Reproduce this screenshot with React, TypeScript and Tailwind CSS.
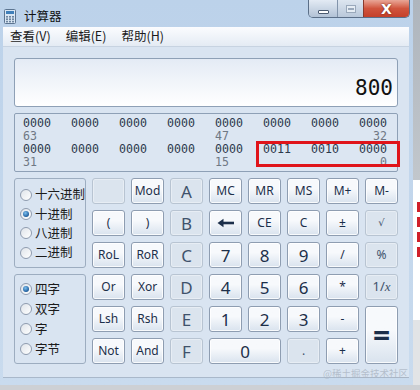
import React from "react";

const cjk = "font-['Microsoft_YaHei','Noto_Sans_CJK_SC',sans-serif]";
const latin = "font-['Segoe_UI','Noto_Sans','Noto_Sans_CJK_SC',sans-serif]";

type Key = { t: React.ReactNode; off?: boolean; big?: boolean; span?: string };

const keys: Key[] = [
  { t: "", off: true }, { t: "Mod" }, { t: "A", off: true, big: true }, { t: "MC" }, { t: "MR" }, { t: "MS" }, { t: "M+" }, { t: "M-" },
  { t: "(" }, { t: ")" }, { t: "B", off: true, big: true }, { t: "back" }, { t: "CE" }, { t: "C" }, { t: "±" }, { t: "√", off: true },
  { t: "RoL" }, { t: "RoR" }, { t: "C", off: true, big: true }, { t: "7", big: true }, { t: "8", big: true }, { t: "9", big: true }, { t: "/" }, { t: "%", off: true },
  { t: "Or" }, { t: "Xor" }, { t: "D", off: true, big: true }, { t: "4", big: true }, { t: "5", big: true }, { t: "6", big: true }, { t: "*" }, { t: "1/x", off: true },
  { t: "Lsh" }, { t: "Rsh" }, { t: "E", off: true, big: true }, { t: "1", big: true }, { t: "2", big: true }, { t: "3", big: true }, { t: "-" }, { t: "=", span: "row-span-2" },
  { t: "Not" }, { t: "And" }, { t: "F", off: true, big: true }, { t: "0", big: true, span: "col-span-2" }, { t: ".", off: true }, { t: "+" },
];

function KeyLabel({ k }: { k: Key }) {
  if (k.t === "back")
    return (
      <svg width="18" height="10" viewBox="0 0 18 10">
        <path d="M5 5H17" stroke="#1c2f4a" strokeWidth="2.6" />
        <path d="M0.5 5L6.5 0.8V9.2Z" fill="#1c2f4a" />
      </svg>
    );
  if (k.t === "1/x")
    return (
      <span className="text-[13px]">
        1/<span className="font-['Liberation_Serif',serif] italic">x</span>
      </span>
    );
  if (k.t === "√") return <span className="font-['DejaVu_Sans',sans-serif] text-[10px] leading-none">√</span>;
  if (k.t === "=") return <span className="text-[30px] font-bold leading-none">=</span>;
  return <span className={k.big ? "text-[17px] leading-none" : "text-[12px] leading-none"}>{k.t}</span>;
}

function Btn({ k }: { k: Key }) {
  const look = k.off
    ? "border-[#b8c4d2] bg-[#dbe4ee] text-[#3f526b] shadow-[inset_0_0_0_1px_rgba(255,255,255,0.35)]"
    : "border-[#8e9db1] bg-linear-to-b from-[#f7f9fc] from-40% to-[#d9e3ee] text-[#1c2f4a] shadow-[inset_0_0_0_1px_rgba(255,255,255,0.8)]";
  return (
    <div className={`flex items-center justify-center rounded-[3px] border ${look} ${k.span ?? ""}`}>
      <KeyLabel k={k} />
    </div>
  );
}

function Radio({ label, on, h }: { label: string; on?: boolean; h: string }) {
  return (
    <div className={`flex items-center gap-[3px] ${h}`}>
      <span className="flex size-[12px] items-center justify-center rounded-full border border-[#8f9caf] bg-linear-to-br from-[#dfe4ea] to-white">
        {on && <span className="size-[6px] rounded-full bg-[radial-gradient(circle_at_40%_35%,#7cc0f0,#1f5d9c_70%,#123c68)]" />}
      </span>
      <span className="text-[12.5px] text-[#1b1b1b]">{label}</span>
    </div>
  );
}

const bitRow = ["0000", "0000", "0000", "0000", "0000", "0000", "0000", "0000"];
const bitRow2 = ["0000", "0000", "0000", "0000", "0000", "0011", "0010", "0000"];

function Bits({ row }: { row: string[] }) {
  return (
    <div className="grid grid-cols-[repeat(7,48px)_28px] text-[#2c3a4c]">
      {row.map((b, i) => (
        <span key={i}>{b}</span>
      ))}
    </div>
  );
}

function Labels({ a, b, c }: { a: string; b: string; c: string }) {
  return (
    <div className="grid grid-cols-[192px_144px_28px] text-[#6f7884]">
      <span>{a}</span>
      <span>{b}</span>
      <span className="text-right">{c}</span>
    </div>
  );
}

export default function App() {
  return (
    <div className="relative flex h-[390px] w-[420px] flex-col overflow-hidden bg-[#c9cdd2]">
      <div className="flex h-[385px]">
        {/* window */}
        <div className="relative flex w-[413px] flex-col bg-linear-to-b from-[#bcd2ea] to-[#c9dbee]">
          <div className="flex h-[27px] items-start justify-between">
            <div className="flex items-center gap-[8px] pl-[4px] pt-[7px]">
              <svg width="12" height="15" viewBox="0 0 12 15">
                <rect x="0.5" y="0.5" width="11" height="14" rx="1" fill="#d9e6f3" stroke="#5c7591" />
                <rect x="2" y="2" width="8" height="3" fill="#3f7fb9" />
                {[0, 1, 2].map((r) =>
                  [0, 1, 2].map((c) => <rect key={`${r}${c}`} x={2 + c * 3} y={7 + r * 2.4} width="2" height="1.6" fill="#6d85a0" />)
                )}
              </svg>
              <span className={`${cjk} text-[12.5px] text-[#111]`}>计算器</span>
            </div>
            <div className="mr-[3px] flex h-[18px] overflow-hidden rounded-b-[5px] border border-t-0 border-[#5b6f88]">
              <div className="flex w-[28px] items-center justify-center bg-linear-to-b from-[#e3ebf4] to-[#b2c2d6]">
                <span className="mt-[6px] h-[4px] w-[11px] rounded-[1px] border border-[#4a5a70] bg-white" />
              </div>
              <div className="flex w-[26px] items-center justify-center border-l border-[#8294ab] bg-linear-to-b from-[#dde6f0] to-[#b9c8da]">
                <span className="flex h-[8px] w-[10px] items-center justify-center border border-[#9aa9bb] bg-[#e6edf4]">
                  <span className="h-[2px] w-[6px] border border-[#9aa9bb]" />
                </span>
              </div>
              <div className="flex w-[46px] items-center justify-center border-l border-[#8a3a2c] bg-linear-to-b from-[#e8a697] via-[#d0543d] to-[#c4402a]">
                <span className="text-[14px] font-bold leading-none text-white [text-shadow:0_0_2px_#5a1a10] font-['DejaVu_Sans',sans-serif]">X</span>
              </div>
            </div>
          </div>

          <div className="mx-[3px] mr-[4px] flex flex-1 flex-col">
            {/* menu */}
            <div className={`${cjk} flex h-[20px] items-center gap-[15px] border-b border-[#c7d3e1] bg-linear-to-b from-[#fbfcfe] to-[#e4ebf4] pl-[7px] text-[12.5px] text-[#1b1b1b]`}>
              <span>查看(V)</span>
              <span>编辑(E)</span>
              <span>帮助(H)</span>
            </div>

            {/* client */}
            <div className="flex flex-1 flex-col border-b border-[#a9b8ca] bg-[#d9e4f1] px-[11px] pt-[11px]">
              <div className="flex h-[49px] items-end justify-end rounded-[3px] border border-[#8ea0b6] bg-linear-to-b from-[#e4ebf5] to-white pb-[6px] pr-[4px]">
                <span className="font-['DejaVu_Sans_Mono',monospace] text-[21px] leading-[24px] text-[#111]">800</span>
              </div>

              <div className="relative mt-[6px] h-[59px] rounded-[2px] border border-[#8ea0b6] bg-[#dce6f2] pl-[8px] pt-[3px] font-['DejaVu_Sans_Mono',monospace] text-[11.6px] leading-[13px]">
                <Bits row={bitRow} />
                <Labels a="63" b="47" c="32" />
                <Bits row={bitRow2} />
                <Labels a="31" b="15" c="0" />
                <div className="absolute left-[241px] top-[27px] h-[26px] w-[144px] border-[3px] border-[#e0141a]" />
              </div>

              <div className="mt-[6px] flex gap-[6px]">
                <div className={`${cjk} flex w-[72px] flex-col gap-[6px]`}>
                  <div className="h-[90px] rounded-[3px] border border-[#9dadc0] pl-[5px] pt-[6px]">
                    <Radio label="十六进制" h="h-[19.3px]" />
                    <Radio label="十进制" on h="h-[19.3px]" />
                    <Radio label="八进制" h="h-[19.3px]" />
                    <Radio label="二进制" h="h-[19.3px]" />
                  </div>
                  <div className="h-[90px] rounded-[3px] border border-[#9dadc0] pl-[5px] pt-[4px]">
                    <Radio label="四字" on h="h-[20px]" />
                    <Radio label="双字" h="h-[20px]" />
                    <Radio label="字" h="h-[20px]" />
                    <Radio label="字节" h="h-[20px]" />
                  </div>
                </div>
                <div className={`${latin} grid grid-cols-[repeat(8,33px)] grid-rows-[repeat(6,26px)] gap-[6px]`}>
                  {keys.map((k, i) => (
                    <Btn key={i} k={k} />
                  ))}
                </div>
              </div>
            </div>
            <div className="h-[7px]" />
          </div>

          <span className={`${cjk} absolute right-[5px] top-[366px] text-[9.5px] text-[#aab4c2]/80`}>@稀土掘金技术社区</span>
        </div>

        {/* neighbouring window behind */}
        <div className="flex w-[7px] flex-col">
          <div className="h-[180px] bg-linear-to-b from-[#aeb5bd] to-[#c2c7cc]" />
          <div className="flex h-[140px] flex-col items-end gap-[5px] bg-white pt-[22px]">
            <span className="h-[10px] w-[3px] bg-[#d0202a]" />
            <span className="h-[10px] w-[3px] bg-[#d0202a]" />
            <span className="h-[10px] w-[3px] bg-[#d0202a]" />
            <span className="h-[10px] w-[3px] bg-[#d0202a]" />
          </div>
          <div className="flex-1 bg-[#e2e4e6]" />
        </div>
      </div>
      <div className="h-[5px] bg-[#cdd0d4]" />
    </div>
  );
}
